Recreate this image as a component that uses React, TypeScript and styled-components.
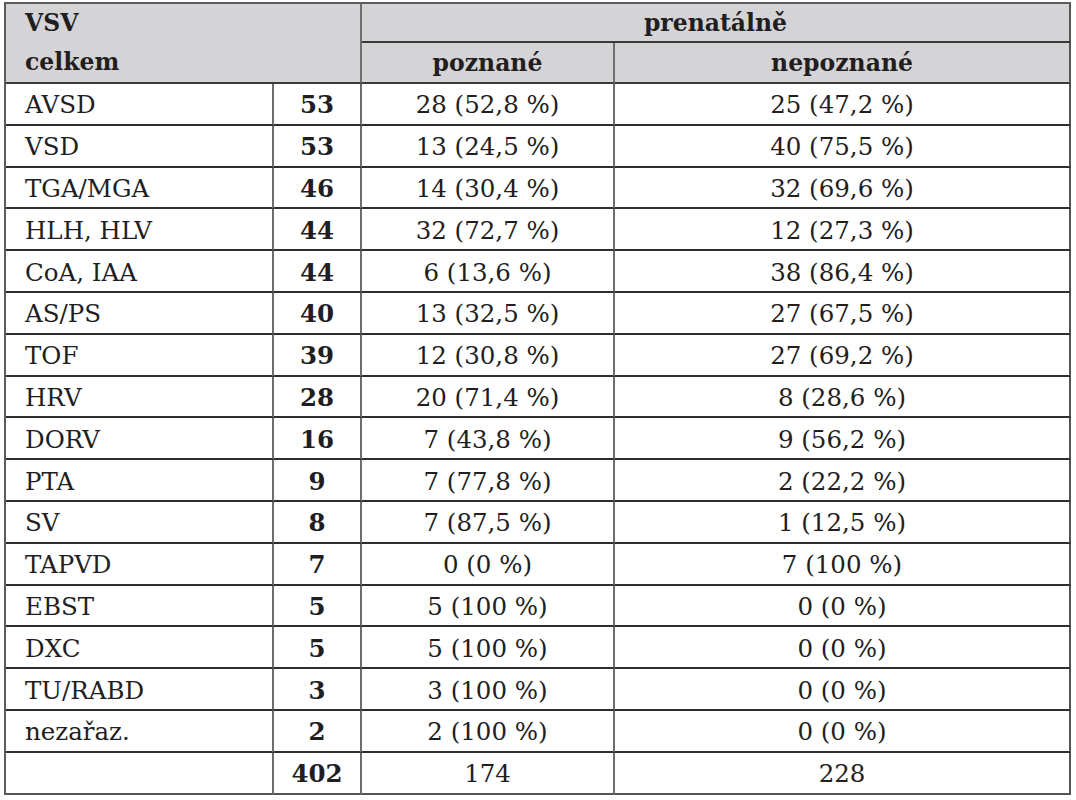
import React from "react";
import styled, { createGlobalStyle } from "styled-components";

const Global = createGlobalStyle`
  html, body { margin: 0; padding: 0; background: #ffffff; }
  body { font-family: "DejaVu Serif", "Liberation Serif", serif; color: #221e1f; }
`;

const Page = styled.div`
  padding: 2px 0 0 4px;
`;

const Table = styled.table`
  width: 1067px;
  table-layout: fixed;
  border-collapse: separate;
  border-spacing: 0;
  border-top: 2px solid #5c5c5c;
  border-left: 2px solid #5c5c5c;
  font-size: 23.5px;
`;

const HeadCell = styled.th<{ $last?: boolean; $h: number }>`
  background: #d4d4d6;
  font-weight: 700;
  text-align: center;
  border-right: 2px solid ${(p) => (p.$last ? "#555" : "#6e6e6e")};
  border-bottom: 2px solid #3a3a3a;
  padding: 1px 10px 0;
  height: ${(p) => p.$h}px;
  line-height: 30px;
  box-sizing: border-box;
  vertical-align: middle;
`;

const CornerCell = styled.th`
  background: #d4d4d6;
  font-weight: 700;
  text-align: left;
  vertical-align: top;
  line-height: 39px;
  padding: 0 0 0 19px;
  border-right: 2px solid #6e6e6e;
  border-bottom: 2px solid #3a3a3a;
`;

const Cell = styled.td<{ $left?: boolean; $bold?: boolean; $last?: boolean; $bottom?: boolean }>`
  text-align: ${(p) => (p.$left ? "left" : "center")};
  font-weight: ${(p) => (p.$bold ? 700 : 400)};
  font-size: 24.5px;
  padding: 3px 0 0 ${(p) => (p.$left ? "19px" : "0")};
  height: 41.8px;
  line-height: 30px;
  box-sizing: border-box;
  border-right: 2px solid ${(p) => (p.$last ? "#555" : "#6e6e6e")};
  border-bottom: 2px solid ${(p) => (p.$bottom ? "#555" : "#2e2e2e")};
  vertical-align: middle;
  white-space: nowrap;
`;

type Row = [string, string, string, string];

const rows: Row[] = [
  ["AVSD", "53", "28 (52,8 %)", "25 (47,2 %)"],
  ["VSD", "53", "13 (24,5 %)", "40 (75,5 %)"],
  ["TGA/MGA", "46", "14 (30,4 %)", "32 (69,6 %)"],
  ["HLH, HLV", "44", "32 (72,7 %)", "12 (27,3 %)"],
  ["CoA, IAA", "44", "6 (13,6 %)", "38 (86,4 %)"],
  ["AS/PS", "40", "13 (32,5 %)", "27 (67,5 %)"],
  ["TOF", "39", "12 (30,8 %)", "27 (69,2 %)"],
  ["HRV", "28", "20 (71,4 %)", "8 (28,6 %)"],
  ["DORV", "16", "7 (43,8 %)", "9 (56,2 %)"],
  ["PTA", "9", "7 (77,8 %)", "2 (22,2 %)"],
  ["SV", "8", "7 (87,5 %)", "1 (12,5 %)"],
  ["TAPVD", "7", "0 (0 %)", "7 (100 %)"],
  ["EBST", "5", "5 (100 %)", "0 (0 %)"],
  ["DXC", "5", "5 (100 %)", "0 (0 %)"],
  ["TU/RABD", "3", "3 (100 %)", "0 (0 %)"],
  ["nezařaz.", "2", "2 (100 %)", "0 (0 %)"],
  ["", "402", "174", "228"],
];

export default function App() {
  return (
    <Page>
      <Global />
      <Table>
        <colgroup>
          <col style={{ width: 268 }} />
          <col style={{ width: 88 }} />
          <col style={{ width: 253 }} />
          <col />
        </colgroup>
        <thead>
          <tr>
            <CornerCell colSpan={2} rowSpan={2}>
              VSV
              <br />
              celkem
            </CornerCell>
            <HeadCell colSpan={2} $last $h={39}>
              prenatálně
            </HeadCell>
          </tr>
          <tr>
            <HeadCell $h={40}>poznané</HeadCell>
            <HeadCell $last $h={40}>
              nepoznané
            </HeadCell>
          </tr>
        </thead>
        <tbody>
          {rows.map((r, i) => {
            const bottom = i === rows.length - 1;
            return (
              <tr key={i}>
                <Cell $left $bottom={bottom}>
                  {r[0]}
                </Cell>
                <Cell $bold $bottom={bottom}>
                  {r[1]}
                </Cell>
                <Cell $bottom={bottom}>{r[2]}</Cell>
                <Cell $last $bottom={bottom}>
                  {r[3]}
                </Cell>
              </tr>
            );
          })}
        </tbody>
      </Table>
    </Page>
  );
}
